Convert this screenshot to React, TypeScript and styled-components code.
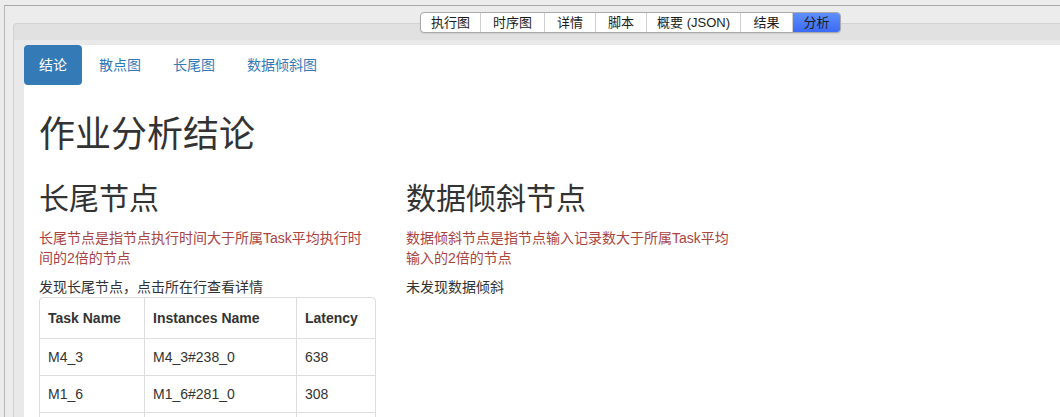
import React from 'react';
import styled, { createGlobalStyle } from 'styled-components';

const Global = createGlobalStyle`
  html, body { margin: 0; padding: 0; height: 417px; overflow: hidden; background: #ececec; }
  body {
    font-family: "Liberation Sans", "Noto Sans CJK SC", Arial, sans-serif;
    font-size: 14px;
    color: #333;
  }
  * { box-sizing: border-box; }
`;

const Page = styled.div`
  position: relative;
  height: 417px;
  padding-top: 5px;
`;

const Frame = styled.div`
  height: 100%;
  margin-left: 4px;
  border-top: 1px solid #a8a8a8;
  border-left: 1px solid #b8b8b8;
  padding: 17px 0 0 8px;
`;

const Panel = styled.div`
  height: 100%;
  display: flex;
  flex-direction: column;
  background: #e1e1e1;
  border: 1px solid #d2d2d2;
  border-right: none;
  border-bottom: none;
  border-radius: 4px 0 0 0;
`;

const PanelHead = styled.div`
  height: 16px;
  flex: none;
`;

const PanelBody = styled.div`
  flex: 1;
  background: #e9e9e9;
  padding: 5px 0 0 10px;
  display: flex;
`;

const Content = styled.div`
  flex: 1;
  background: #fff;
`;

const Segmented = styled.div`
  position: absolute;
  top: 12px;
  left: 420px;
  display: flex;
  height: 21px;
  background: #fff;
  border: 1px solid #a9a9a9;
  border-radius: 4px;
  overflow: hidden;
  box-shadow: 0 1px 1px rgba(0, 0, 0, 0.08);
`;

const Segment = styled.div<{ $w: number; $active?: boolean; $first?: boolean }>`
  width: ${p => p.$w}px;
  font-size: 13px;
  line-height: 19px;
  text-align: center;
  color: #1c1c1c;
  border-left: ${p => (p.$first ? 'none' : '1px solid #cfcfcf')};
  background: ${p => (p.$active ? 'linear-gradient(#5f8ff9, #3b6af5)' : 'transparent')};
`;

const Nav = styled.div`
  display: flex;
  gap: 2px;
`;

const Pill = styled.div<{ $active?: boolean }>`
  padding: 10px 15px;
  line-height: 20px;
  font-size: 14px;
  border-radius: 4px;
  color: ${p => (p.$active ? '#fff' : '#337ab7')};
  background: ${p => (p.$active ? '#337ab7' : 'transparent')};
`;

const TabContent = styled.div`
  padding: 0 15px;
`;

const H1 = styled.h1`
  font-size: 36px;
  font-weight: 400;
  line-height: 40px;
  margin: 30px 0 0;
  color: #333;
`;

const Columns = styled.div`
  display: grid;
  grid-template-columns: 367px 367px;
`;

const Col = styled.div`
  padding-right: 30px;
`;

const H2 = styled.h2`
  font-size: 30px;
  font-weight: 400;
  line-height: 33px;
  margin: 27px 0 13px;
  color: #333;
`;

const Danger = styled.p`
  color: #a94442;
  line-height: 20px;
  margin: 0 0 10px;
  padding-right: 5px;
`;

const Hint = styled.div`
  line-height: 20px;
  margin-top: -1px;
`;

const Table = styled.table`
  width: 100%;
  table-layout: fixed;
  border-collapse: separate;
  border-spacing: 0;
  border: 1px solid #ddd;
  border-radius: 4px;
  font-size: 14px;
`;

const ColW = styled.col<{ $w: number }>`
  width: ${p => p.$w}px;
`;

const Th = styled.th<{ $first?: boolean }>`
  text-align: left;
  font-weight: bold;
  padding: 10px 8px;
  line-height: 20px;
  border-left: ${p => (p.$first ? 'none' : '1px solid #ddd')};
  color: #333;
`;

const Td = styled.td<{ $first?: boolean }>`
  padding: 8px;
  height: 37px;
  line-height: 20px;
  border-top: 1px solid #ddd;
  border-left: ${p => (p.$first ? 'none' : '1px solid #ddd')};
  color: #333;
`;

const segments = [
  { label: '执行图', w: 59 },
  { label: '时序图', w: 64 },
  { label: '详情', w: 51 },
  { label: '脚本', w: 51 },
  { label: '概要 (JSON)', w: 94 },
  { label: '结果', w: 52 },
  { label: '分析', w: 48, active: true },
];

const tabs = ['结论', '散点图', '长尾图', '数据倾斜图'];

const rows = [
  ['M4_3', 'M4_3#238_0', '638'],
  ['M1_6', 'M1_6#281_0', '308'],
  ['', '', ''],
];

export default function App() {
  return (
    <>
      <Global />
      <Page>
        <Frame>
          <Panel>
            <PanelHead />
            <PanelBody>
              <Content>
                <Nav>
                  {tabs.map((t, i) => (
                    <Pill key={t} $active={i === 0}>{t}</Pill>
                  ))}
                </Nav>
                <TabContent>
                  <H1>作业分析结论</H1>
                  <Columns>
                    <Col>
                      <H2>长尾节点</H2>
                      <Danger>长尾节点是指节点执行时间大于所属Task平均执行时间的2倍的节点</Danger>
                      <Hint>发现长尾节点，点击所在行查看详情</Hint>
                      <Table>
                        <colgroup>
                          <ColW $w={104} />
                          <ColW $w={152} />
                          <ColW $w={79} />
                        </colgroup>
                        <thead>
                          <tr>
                            <Th $first>Task Name</Th>
                            <Th>Instances Name</Th>
                            <Th>Latency</Th>
                          </tr>
                        </thead>
                        <tbody>
                          {rows.map((r, i) => (
                            <tr key={i}>
                              <Td $first>{r[0]}</Td>
                              <Td>{r[1]}</Td>
                              <Td>{r[2]}</Td>
                            </tr>
                          ))}
                        </tbody>
                      </Table>
                    </Col>
                    <Col>
                      <H2>数据倾斜节点</H2>
                      <Danger>数据倾斜节点是指节点输入记录数大于所属Task平均输入的2倍的节点</Danger>
                      <Hint>未发现数据倾斜</Hint>
                    </Col>
                  </Columns>
                </TabContent>
              </Content>
            </PanelBody>
          </Panel>
        </Frame>
        <Segmented>
          {segments.map((s, i) => (
            <Segment key={s.label} $w={s.w} $active={s.active} $first={i === 0}>
              {s.label}
            </Segment>
          ))}
        </Segmented>
      </Page>
    </>
  );
}
